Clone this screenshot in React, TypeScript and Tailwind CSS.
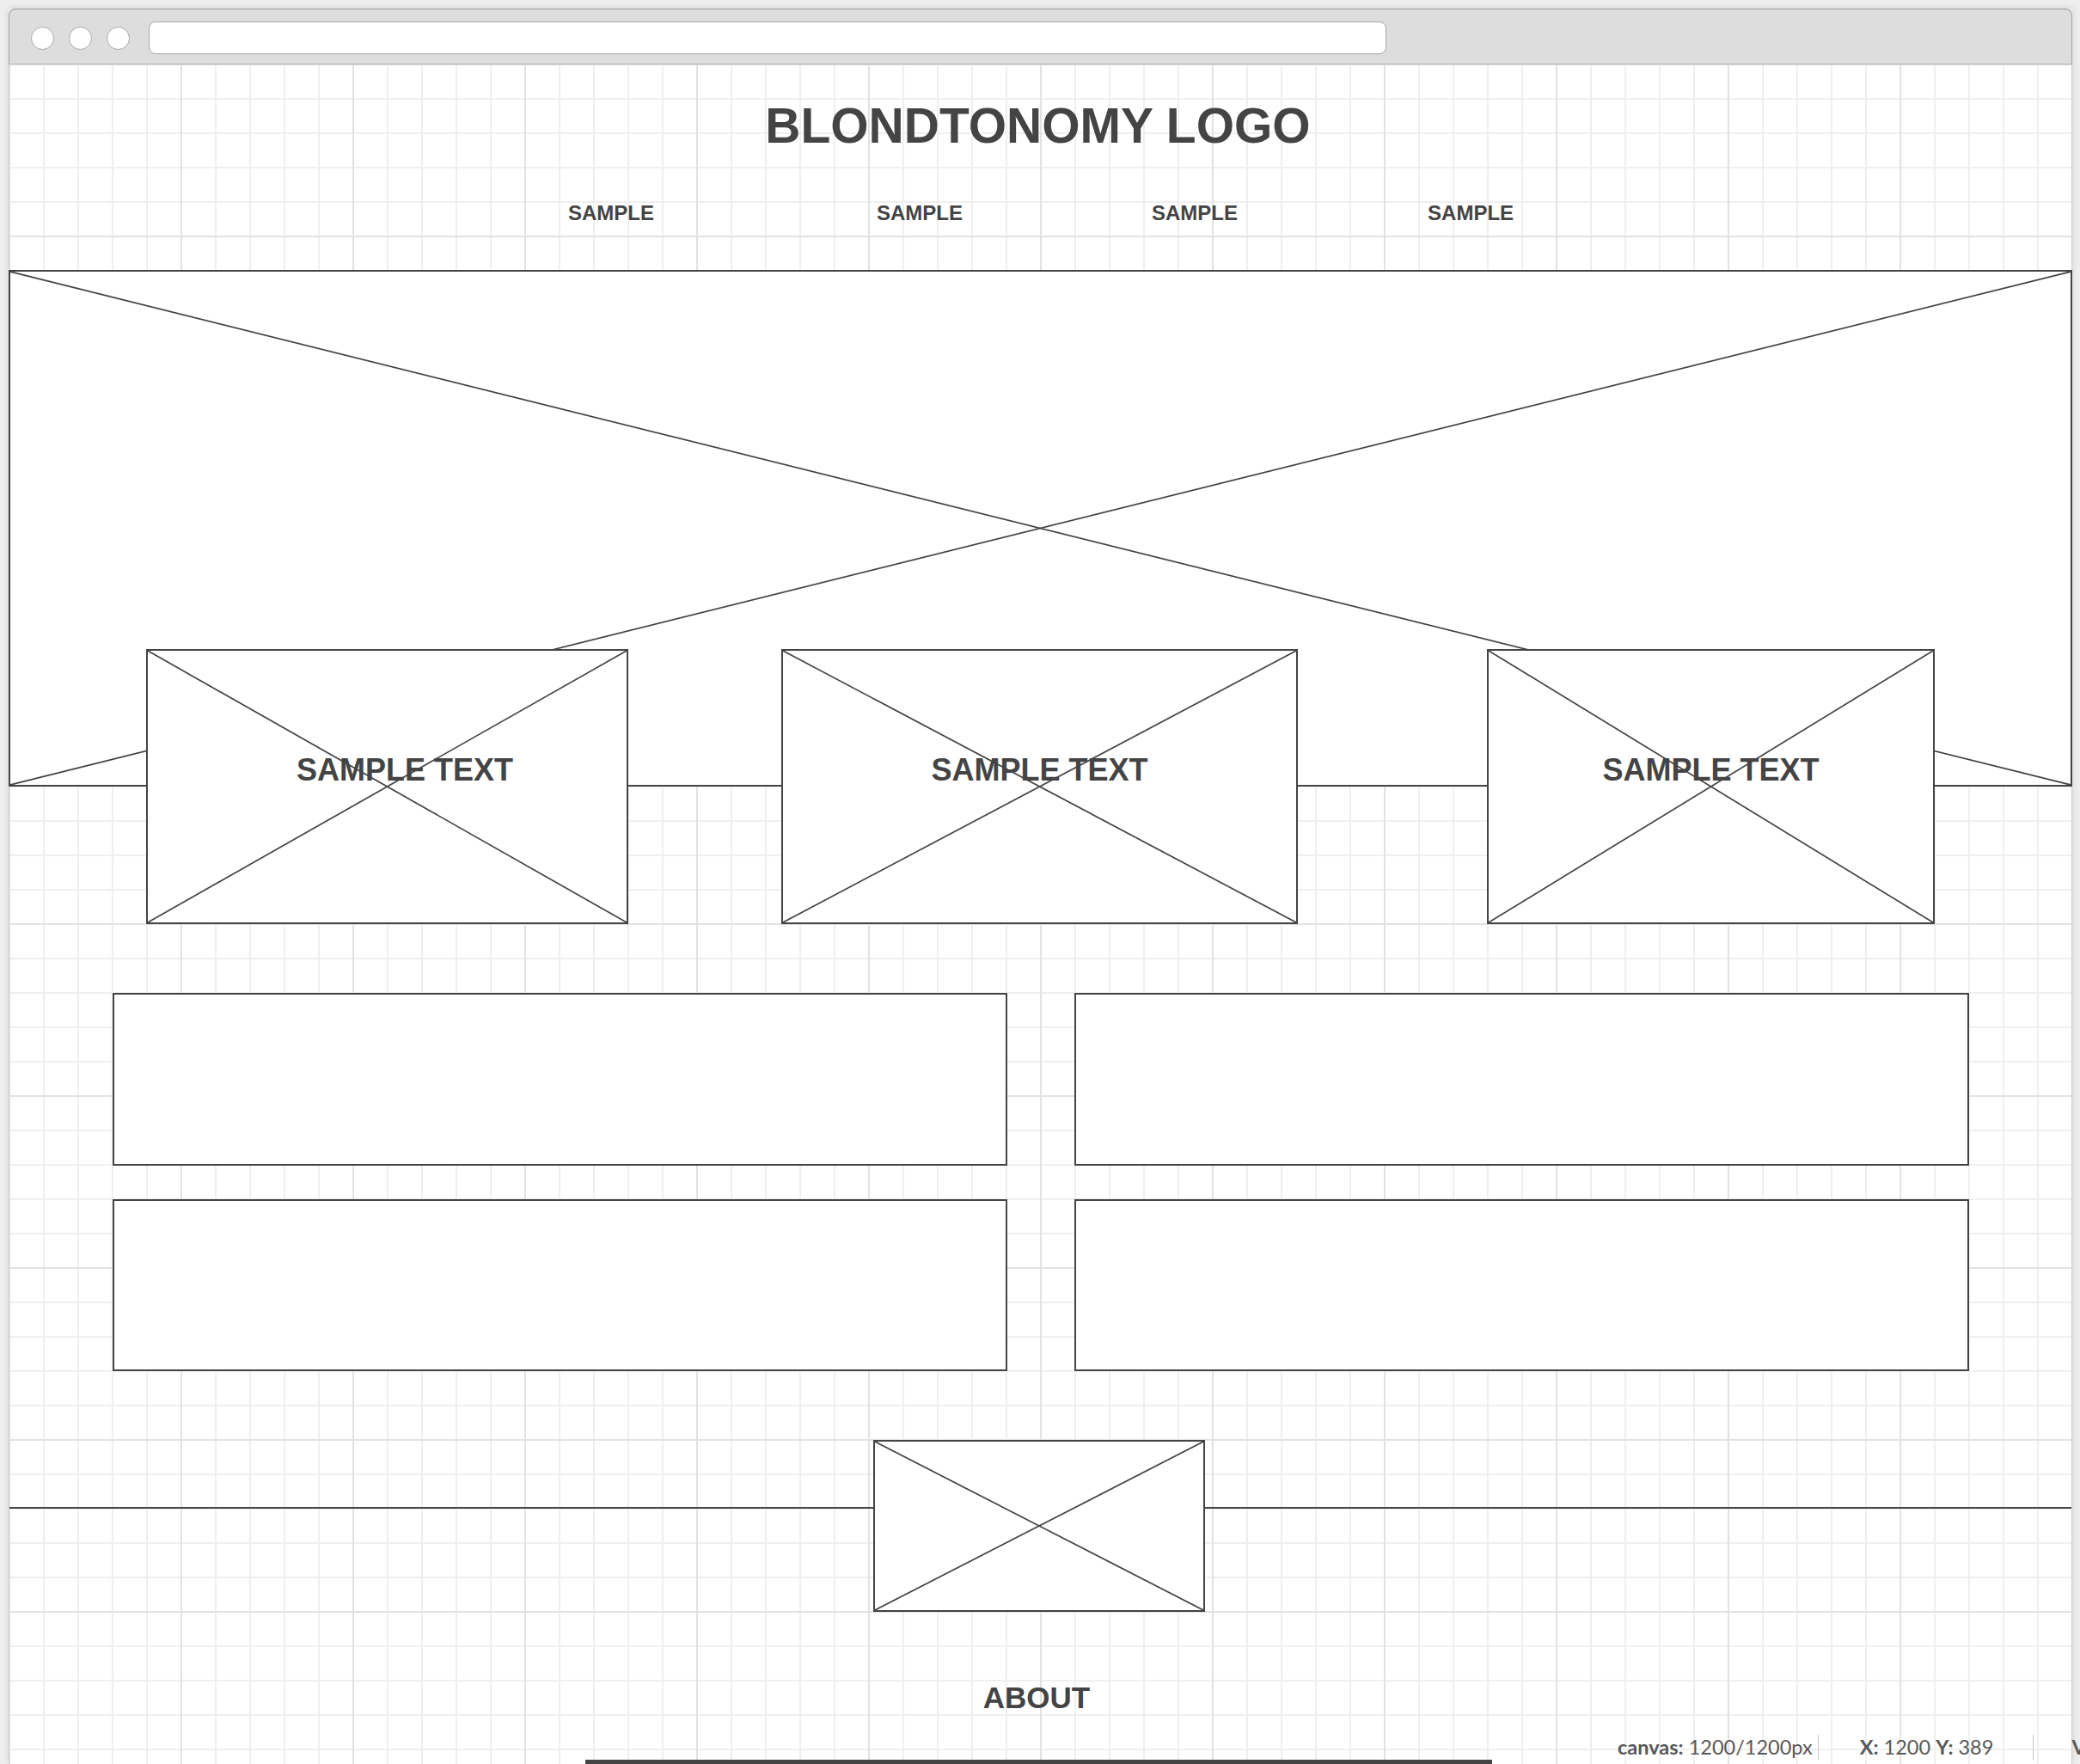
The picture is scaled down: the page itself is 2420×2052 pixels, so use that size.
import React from "react";

function XLines({ w = 1.7 }: { w?: number }) {
  return (
    <svg
      className="absolute inset-0 h-full w-full"
      preserveAspectRatio="none"
      viewBox="0 0 100 100"
    >
      <line x1="0" y1="0" x2="100" y2="100" stroke="#444" strokeWidth={w} vectorEffect="non-scaling-stroke" />
      <line x1="100" y1="0" x2="0" y2="100" stroke="#444" strokeWidth={w} vectorEffect="non-scaling-stroke" />
    </svg>
  );
}

function Card({ width, ml, textPad = "" }: { width: string; ml: string; textPad?: string }) {
  return (
    <div className={`relative h-[320px] shrink-0 border-2 border-[#444] bg-white ${width} ${ml}`}>
      <XLines />
      <div className={`relative pt-[121px] text-center text-[36px] font-bold leading-none text-[#444] ${textPad}`}>
        SAMPLE TEXT
      </div>
    </div>
  );
}

export default function App() {
  return (
    <div className="relative h-[2052px] w-[2420px] overflow-hidden bg-[#eeeeee] pl-[10px] pt-[10px] [font-family:'Liberation_Sans',Arial,sans-serif]">
      <div className="w-[2401px] shadow-[0_0_8px_rgba(0,0,0,0.12)]">
        {/* browser chrome */}
        <div className="flex h-[65px] items-start rounded-t-[8px] border-x border-b border-t border-x-[#a3a3a3] border-b-[#b3b3b3] border-t-[#9c9c9c] bg-[#dddddd] pl-[25px]">
          <div className="mt-[19.5px] h-[27px] w-[27px] rounded-full border-[1.5px] border-[#a8a8a8] bg-white" />
          <div className="ml-[17px] mt-[19.5px] h-[27px] w-[27px] rounded-full border-[1.5px] border-[#a8a8a8] bg-white" />
          <div className="ml-[17px] mt-[19.5px] h-[27px] w-[27px] rounded-full border-[1.5px] border-[#a8a8a8] bg-white" />
          <div className="ml-[21.5px] mt-[14px] h-[38px] w-[1440px] rounded-[8px] border-[1.5px] border-[#a8a8a8] bg-white" />
        </div>

        {/* canvas */}
        <div className="relative flex h-[1977px] flex-col border-x border-[#d0d0d0] bg-white [background-image:linear-gradient(to_right,#e2e2e2_2px,transparent_2px),linear-gradient(to_bottom,#e2e2e2_2px,transparent_2px),linear-gradient(to_right,#efefef_2px,transparent_2px),linear-gradient(to_bottom,#efefef_2px,transparent_2px)] [background-position:-1px_-1px] [background-size:200px_200px,200px_200px,40px_40px,40px_40px]">
          {/* logo */}
          <div className="flex justify-center pr-[6px] pt-[43px]">
            <div className="text-[57px] font-bold leading-none text-[#444]">BLONDTONOMY LOGO</div>
          </div>

          {/* nav */}
          <div className="mt-[61px] flex h-[24px] text-[24px] font-bold leading-none text-[#444]">
            <span className="ml-[650px]">SAMPLE</span>
            <span className="ml-[259px]">SAMPLE</span>
            <span className="ml-[220px]">SAMPLE</span>
            <span className="ml-[221px]">SAMPLE</span>
          </div>

          {/* hero */}
          <div className="relative -mx-[1px] mt-[54px] h-[601px] shrink-0 border-2 border-[#444] bg-white">
            <XLines />
          </div>

          {/* cards */}
          <div className="relative -mt-[160px] flex">
            <Card width="w-[561px]" ml="ml-[159px]" textPad="pl-[41px]" />
            <Card width="w-[601px]" ml="ml-[178px]" />
            <Card width="w-[521px]" ml="ml-[220px]" />
          </div>

          {/* text boxes */}
          <div className="mt-[80px] flex">
            <div className="ml-[120px] h-[201px] w-[1041px] border-2 border-[#444] bg-white" />
            <div className="ml-[78px] h-[201px] w-[1041px] border-2 border-[#444] bg-white" />
          </div>
          <div className="mt-[39px] flex">
            <div className="ml-[120px] h-[200px] w-[1041px] border-2 border-[#444] bg-white" />
            <div className="ml-[78px] h-[200px] w-[1041px] border-2 border-[#444] bg-white" />
          </div>

          {/* footer divider with image */}
          <div className="mt-[80px] flex items-start">
            <div className="mt-[78px] h-[2px] w-[1005px] bg-[#444]" />
            <div className="relative h-[200px] w-[386px] shrink-0 border-2 border-[#444] bg-white">
              <XLines />
            </div>
            <div className="mt-[78px] h-[2px] flex-1 bg-[#444]" />
          </div>

          {/* about */}
          <div className="mt-[82px] flex justify-center pr-[9px]">
            <div className="text-[35px] font-bold leading-none text-[#444]">ABOUT</div>
          </div>

          {/* bar */}
          <div className="ml-[670px] mt-[55px] h-[10px] w-[1055px] bg-[#444]" />
        </div>
      </div>

      {/* status bar overlay */}
      <div className="absolute left-[1882px] top-[2018px] flex items-center whitespace-nowrap text-[23.5px] leading-none text-[#585858] [font-family:Lato,'Noto_Sans',sans-serif]">
        <span>
          <span className="font-bold">canvas:</span> 1200/1200px
        </span>
        <span className="ml-[6px] h-[29px] w-[1px] bg-[#c8c8c8]" />
        <span className="ml-[48px]">
          <span className="font-bold">X:</span> 1200 <span className="font-bold">Y:</span> 389
        </span>
        <span className="ml-[46px] h-[29px] w-[1px] bg-[#c8c8c8]" />
        <span className="ml-[44px] font-bold">V</span>
      </div>
    </div>
  );
}
